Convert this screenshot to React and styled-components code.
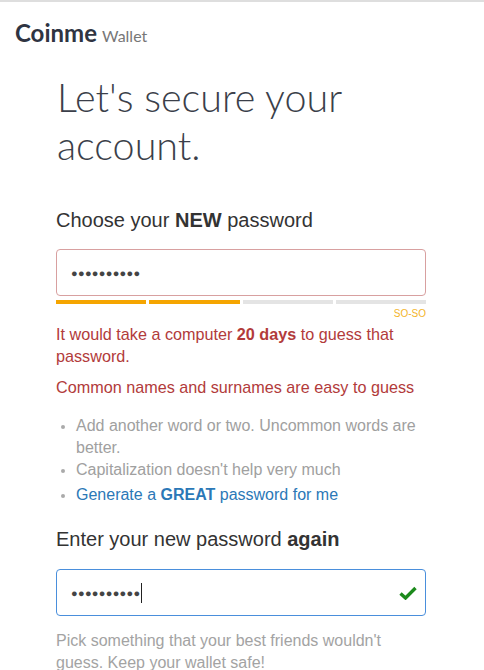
import React from "react";
import styled, { createGlobalStyle } from "styled-components";

const Global = createGlobalStyle`
  html, body { margin: 0; padding: 0; background: #fff; }
  body { font-family: "Liberation Sans", Arial, sans-serif; }
`;

const Page = styled.div`
  border-top: 2px solid #dedede;
  width: 484px;
  box-sizing: border-box;
`;

const Header = styled.header`
  padding: 16px 15px 0;
  display: flex;
  align-items: baseline;
  gap: 5px;
  font-family: Lato, sans-serif;
`;

const Brand = styled.span`
  font-size: 24px;
  font-weight: 700;
  color: #2f3442;
`;

const BrandSub = styled.span`
  font-size: 16px;
  color: #777;
`;

const Main = styled.main`
  padding: 26px 58px 0 56px;
  display: flex;
  flex-direction: column;
`;

const Title = styled.h1`
  margin: 0 0 0 1px;
  font-family: Lato, sans-serif;
  font-weight: 300;
  font-size: 39.5px;
  line-height: 48px;
  color: #3b3f4a;
`;

const Label = styled.label`
  display: block;
  font-size: 20px;
  line-height: 23px;
  color: #333;
  margin-top: ${p => p.$top}px;
  b { font-weight: 700; }
`;

const Field = styled.div`
  margin-top: ${p => p.$top}px;
  height: 47px;
  box-sizing: border-box;
  border: 1px solid ${p => p.$border};
  border-radius: 4px;
  display: flex;
  align-items: center;
  justify-content: space-between;
  padding: 0 8px 0 14px;
`;

const Dots = styled.span`
  font-size: 11px;
  letter-spacing: 0.3px;
  color: #444;
  display: flex;
  align-items: center;
`;

const Caret = styled.span`
  display: inline-block;
  width: 1px;
  height: 20px;
  background: #222;
  margin-left: 1px;
`;

const Strength = styled.div`
  margin-top: 4px;
  display: grid;
  grid-template-columns: repeat(4, 1fr);
  gap: 3px;
`;

const Seg = styled.div`
  height: 4px;
  background: ${p => (p.$on ? "#f5a500" : "#e4e4e4")};
`;

const StrengthLabel = styled.div`
  text-align: right;
  font-size: 10px;
  text-transform: uppercase;
  color: #f3b42a;
  margin-top: 4px;
  line-height: 12px;
`;

const Warn = styled.p`
  margin: ${p => p.$top}px 0 0;
  color: #b23b3b;
  font-size: 16.2px;
  line-height: 22px;
`;

const Tips = styled.ul`
  margin: 17px 0 0;
  padding: 0 0 0 20px;
  color: #a0a0a0;
  font-size: 16px;
  line-height: 22px;
  li::marker { font-size: 14px; color: #aaa; }
`;

const Tip = styled.li`
  margin-bottom: ${p => (p.$gap ? 3 : 0)}px;
`;

const Link = styled.a`
  color: #2b78b7;
  text-decoration: none;
`;

const Hint = styled.p`
  margin: 14px 0 0;
  color: #a3a3a3;
  font-size: 16px;
  line-height: 22px;
`;

const Check = () => (
  <svg width="18" height="14" viewBox="0 0 18 14">
    <path d="M1.5 7.5 L6.5 12 L16.5 2" fill="none" stroke="#1c8a1c" strokeWidth="3.4" strokeLinejoin="miter" />
  </svg>
);

export default function App() {
  return (
    <>
      <Global />
      <Page>
        <Header>
          <Brand>Coinme</Brand>
          <BrandSub>Wallet</BrandSub>
        </Header>
        <Main>
          <Title>Let's secure your account.</Title>
          <Label $top={40}>
            Choose your <b>NEW</b> password
          </Label>
          <Field $top={17} $border="#d8a0a0">
            <Dots>●●●●●●●●●●</Dots>
          </Field>
          <Strength>
            <Seg $on />
            <Seg $on />
            <Seg />
            <Seg />
          </Strength>
          <StrengthLabel>so-so</StrengthLabel>
          <Warn $top={3}>
            It would take a computer <b>20 days</b> to guess that password.
          </Warn>
          <Warn $top={9}>Common names and surnames are easy to guess</Warn>
          <Tips>
            <Tip>Add another word or two. Uncommon words are better.</Tip>
            <Tip $gap>Capitalization doesn't help very much</Tip>
            <Tip>
              <Link href="#">
                Generate a <b>GREAT</b> password for me
              </Link>
            </Tip>
          </Tips>
          <Label $top={22}>
            Enter your new password <b>again</b>
          </Label>
          <Field $top={18} $border="#4a8fdc">
            <Dots>
              ●●●●●●●●●●
              <Caret />
            </Dots>
            <Check />
          </Field>
          <Hint>Pick something that your best friends wouldn't guess. Keep your wallet safe!</Hint>
        </Main>
      </Page>
    </>
  );
}
